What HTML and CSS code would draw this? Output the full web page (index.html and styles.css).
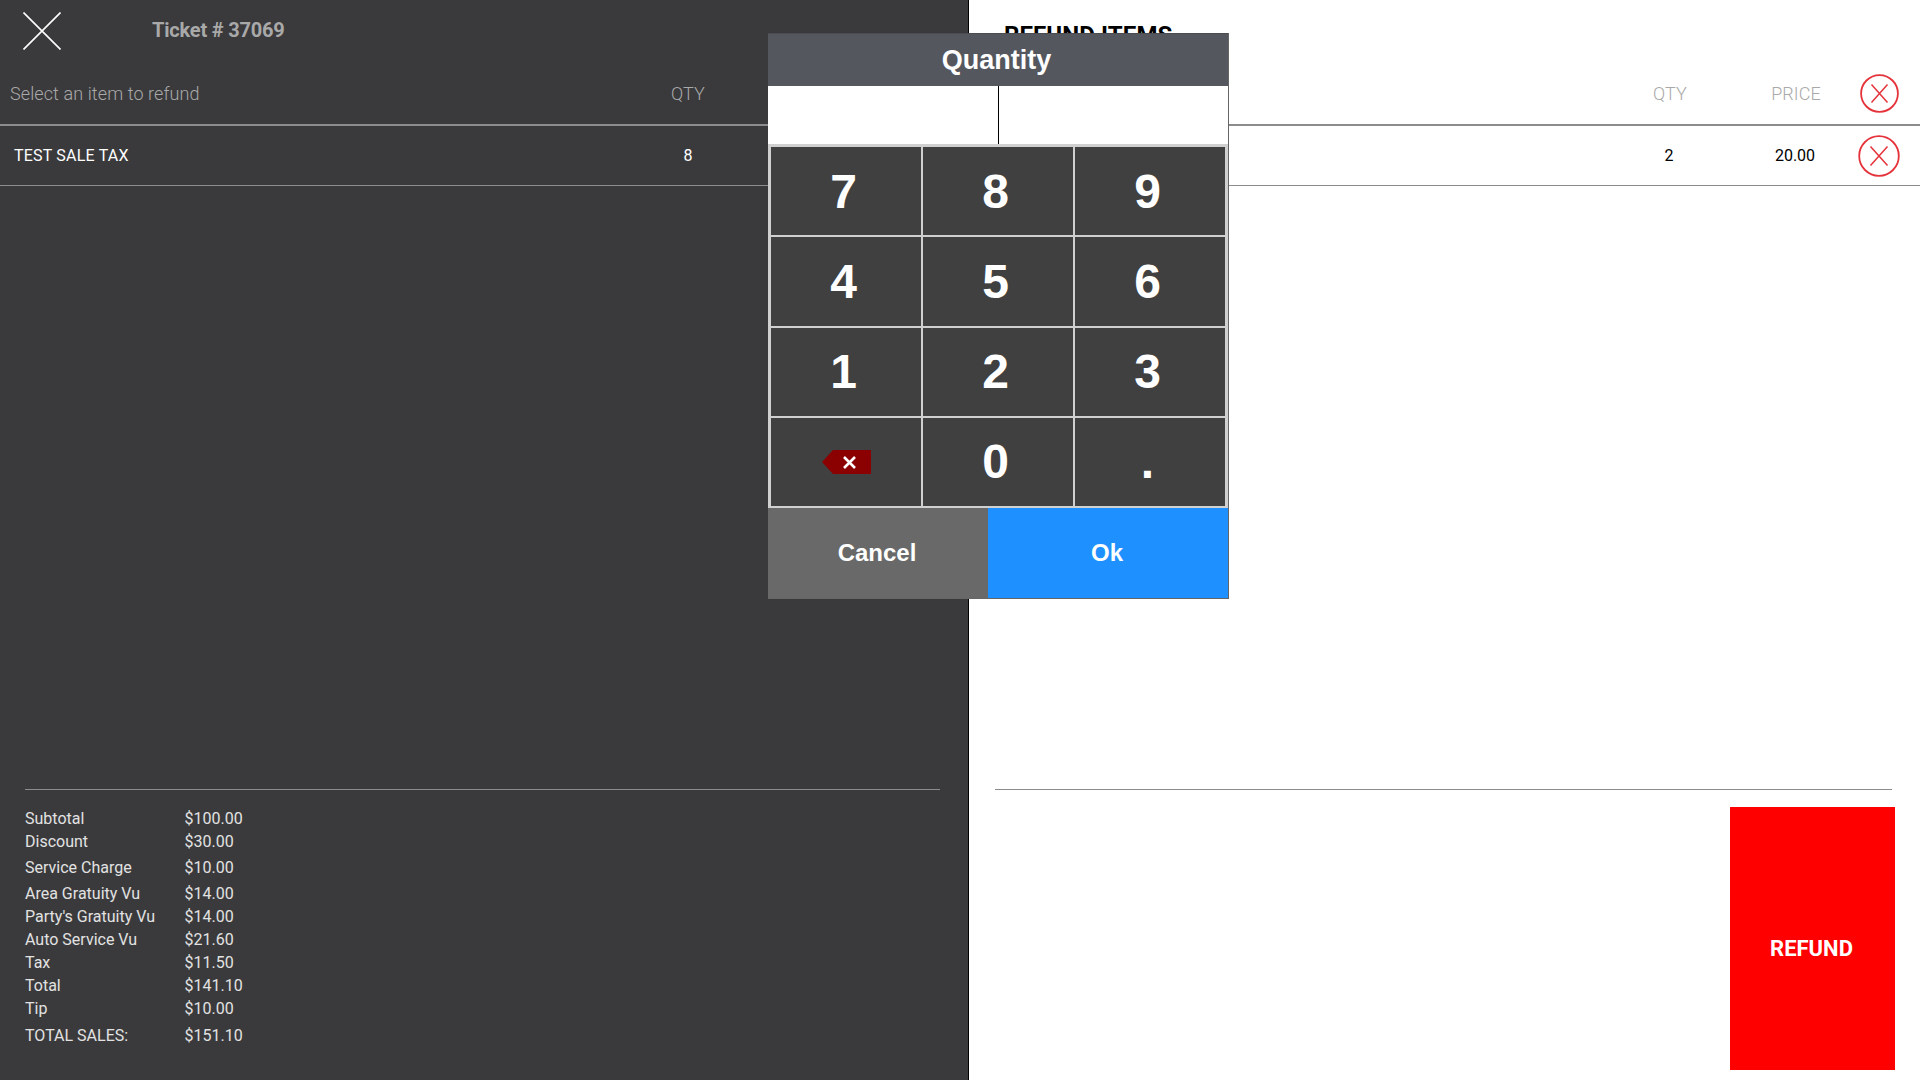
FILE: index.html
```html
<!DOCTYPE html>
<html lang="en">
<head>
    <meta charset="UTF-8">
    <meta name="viewport" content="width=device-width, initial-scale=1.0">
    <title>Refund Ticket</title>
    <link rel="stylesheet" href="styles.css">
</head>
<body>
    <div class="refund-page">
        <!-- Ticket side -->
        <section class="panel panel-dark">
            <div class="top-bar">
                <svg class="close-icon" width="38" height="38" viewBox="0 0 38 38">
                    <path d="M0.5 0.5 L37.5 37.5 M37.5 0.5 L0.5 37.5" stroke="#fff" stroke-width="1.6" fill="none"/>
                </svg>
                <div class="ticket-title">Ticket # 37069</div>
            </div>
            <div class="table-head">
                <div class="col-name">Select an item to refund</div>
                <div class="col-qty">QTY</div>
            </div>
            <div class="table-row">
                <div class="col-name col-name-item">TEST SALE TAX</div>
                <div class="col-qty">8</div>
            </div>
            <div class="panel-footer">
                <div class="summary">
                    <div class="summary-row"><span>Subtotal</span><span>$100.00</span></div>
                    <div class="summary-row"><span>Discount</span><span>$30.00</span></div>
                    <div class="summary-row spaced"><span>Service Charge</span><span>$10.00</span></div>
                    <div class="summary-row spaced"><span>Area Gratuity Vu</span><span>$14.00</span></div>
                    <div class="summary-row"><span>Party's Gratuity Vu</span><span>$14.00</span></div>
                    <div class="summary-row"><span>Auto Service Vu</span><span>$21.60</span></div>
                    <div class="summary-row"><span>Tax</span><span>$11.50</span></div>
                    <div class="summary-row"><span>Total</span><span>$141.10</span></div>
                    <div class="summary-row"><span>Tip</span><span>$10.00</span></div>
                    <div class="summary-row spaced-more"><span>TOTAL SALES:</span><span>$151.10</span></div>
                </div>
            </div>
        </section>

        <!-- Refund side -->
        <section class="panel panel-light">
            <div class="top-bar top-bar-light">
                <div class="refund-title">REFUND ITEMS</div>
            </div>
            <div class="table-head table-head-light">
                <div class="col-qty">QTY</div>
                <div class="col-price">PRICE</div>
                <svg class="remove-icon" width="39" height="39" viewBox="0 0 39 39">
                    <circle cx="19.5" cy="19.5" r="18.4" stroke="#e5333b" stroke-width="1.8" fill="none"/>
                    <path d="M11.5 10.5 L27.5 28.5 M27.5 10.5 L11.5 28.5" stroke="#e5333b" stroke-width="1.5" fill="none"/>
                </svg>
            </div>
            <div class="table-row table-row-light">
                <div class="col-qty">2</div>
                <div class="col-price">20.00</div>
                <svg class="remove-icon remove-icon-row" width="42" height="42" viewBox="0 0 42 42">
                    <circle cx="21" cy="21" r="19.8" stroke="#e5333b" stroke-width="1.8" fill="none"/>
                    <path d="M12.5 11.5 L29.5 30.5 M29.5 11.5 L12.5 30.5" stroke="#e5333b" stroke-width="1.5" fill="none"/>
                </svg>
            </div>
            <div class="panel-footer panel-footer-light">
                <button class="refund-btn">REFUND</button>
            </div>
        </section>
    </div>

    <!-- Quantity keypad popup -->
    <div class="qty-dialog">
        <div class="qty-header">Quantity</div>
        <div class="qty-input"><span class="qty-caret"></span></div>
        <div class="keypad">
            <div class="key">7</div>
            <div class="key">8</div>
            <div class="key">9</div>
            <div class="key">4</div>
            <div class="key">5</div>
            <div class="key">6</div>
            <div class="key">1</div>
            <div class="key">2</div>
            <div class="key">3</div>
            <div class="key key-back">
                <svg width="49" height="24" viewBox="0 0 49 24">
                    <polygon points="0,12 11,0 49,0 49,24 11,24" fill="#8b0000"/>
                    <path d="M22 7 L33 18 M33 7 L22 18" stroke="#fff" stroke-width="2.6" fill="none"/>
                </svg>
            </div>
            <div class="key">0</div>
            <div class="key">.</div>
        </div>
        <div class="qty-actions">
            <button class="qty-btn qty-cancel">Cancel</button>
            <button class="qty-btn qty-ok">Ok</button>
        </div>
    </div>
</body>
</html>
```

FILE: styles.css
```css
/* Reset styles */
* {
    margin: 0;
    padding: 0;
    box-sizing: border-box;
}

body {
    font-family: Roboto, Arial, sans-serif;
    height: 100vh;
    overflow: hidden;
    background-color: #fff;
}

.refund-page {
    display: flex;
    height: 1080px;
}

.panel {
    display: flex;
    flex-direction: column;
    height: 100%;
}

.panel-dark {
    width: 969px;
    background-color: #3a3a3c;
    border-right: 1px solid #000;
    color: #fff;
}

.panel-light {
    flex: 1;
    background-color: #fff;
    color: #000;
}

/* Top bar */
.top-bar {
    display: flex;
    align-items: center;
    height: 62px;
}

.close-icon {
    margin: -1px 0 0 23px;
}

.ticket-title {
    margin: -2px 0 0 91px;
    font-size: 20px;
    font-weight: 700;
    letter-spacing: -0.2px;
    color: #a9a9a9;
}

.top-bar-light {
    align-items: flex-start;
}

.refund-title {
    margin: 22px 0 0 35px;
    font-size: 24px;
    font-weight: 700;
    letter-spacing: 0.1px;
    line-height: 26px;
}

/* Table rows */
.table-head {
    display: flex;
    align-items: center;
    height: 64px;
    border-bottom: 2px solid #8c8c8c;
    font-size: 18px;
    font-weight: 300;
    letter-spacing: 0.1px;
    color: #a9a9a9;
}

.table-row {
    display: flex;
    align-items: center;
    height: 60px;
    border-bottom: 1px solid #8c8c8c;
    font-size: 16px;
    font-weight: 400;
}

.col-name {
    width: 658px;
    padding-left: 10px;
}

.col-name-item {
    padding-left: 14px;
    letter-spacing: 0.2px;
}

.col-qty {
    width: 60px;
    text-align: center;
}

.table-head-light {
    padding-left: 671px;
}

.table-row-light {
    padding-left: 670px;
}

.col-price {
    width: 126px;
    margin-left: 33px;
    text-align: center;
}

.table-row-light .col-price {
    margin-right: 1px;
}

.remove-icon {
    margin: 1px 0 0 1px;
}

.remove-icon-row {
    margin: 0 0 0 -1px;
}

/* Bottom of each panel */
.panel-footer {
    flex: none;
    height: 291px;
    margin: auto 28px 0 25px;
    border-top: 1px solid #8c8c8c;
    padding-top: 17px;
}

.summary {
    font-size: 16px;
    color: #e2e2e2;
}

.summary-row {
    display: flex;
    height: 23px;
    line-height: 23px;
}

.summary-row span:first-child {
    width: 159.5px;
}

.spaced {
    margin-top: 3px;
}

.spaced-more {
    margin-top: 4px;
}

.panel-footer-light {
    display: flex;
    justify-content: flex-end;
    margin: auto 28px 0 26px;
}

.refund-btn {
    width: 165px;
    height: 263px;
    margin-right: -3px;
    padding: 20px 2px 0 0;
    border: none;
    background-color: #f00;
    color: #fff;
    font-family: Roboto, Arial, sans-serif;
    font-size: 22px;
    font-weight: 700;
}

/* Quantity popup */
.qty-dialog {
    position: absolute;
    top: 33px;
    left: 768px;
    width: 461px;
    height: 566px;
    display: flex;
    flex-direction: column;
    border-right: 1px solid #666;
    border-bottom: 1px solid #666;
    font-family: "Liberation Sans", Arial, sans-serif;
    font-weight: 700;
    color: #fff;
    background-color: #ccc;
}

.qty-header {
    height: 53px;
    line-height: 52px;
    padding-right: 3px;
    text-align: center;
    font-size: 27px;
    background-color: #54575e;
    border-top: 1px solid #4a4c52;
}

.qty-input {
    display: flex;
    justify-content: center;
    height: 58px;
    background-color: #fff;
}

.qty-caret {
    width: 1px;
    background-color: #000;
}

.keypad {
    display: grid;
    grid-template-columns: repeat(3, 1fr);
    grid-template-rows: repeat(4, 1fr);
    gap: 2px;
    height: 364px;
    padding: 3px 3px 2px 3px;
    background-color: #d0d0d0;
}

.key {
    display: flex;
    justify-content: center;
    align-items: center;
    padding-right: 5px;
    font-size: 48px;
    background-color: #404040;
}

.key-back {
    padding-right: 0;
}

.qty-actions {
    display: flex;
    flex: 1;
}

.qty-btn {
    padding: 0 2px 1px 0;
    border: none;
    color: #fff;
    font-family: "Liberation Sans", Arial, sans-serif;
    font-size: 24px;
    font-weight: 700;
}

.qty-cancel {
    width: 220px;
    background-color: #696969;
}

.qty-ok {
    flex: 1;
    background-color: #1e90ff;
}
```
